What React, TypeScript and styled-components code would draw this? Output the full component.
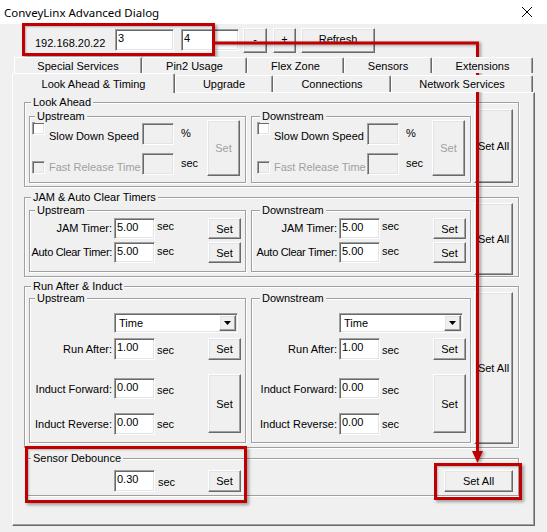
import React from "react"
import styled, { createGlobalStyle, css } from "styled-components"

const GlobalStyle = createGlobalStyle`
  html, body { margin: 0; padding: 0; background: #f0f0f0; }
  body {
    font-family: "Liberation Sans", Arial, sans-serif;
    font-size: 11px;
    color: #000;
  }
  * { box-sizing: border-box; }
`

const sunken = css`
  border: 1px solid;
  border-color: #a0a0a0 #fff #fff #a0a0a0;
  box-shadow: inset 1px 1px 0 #696969, inset -1px -1px 0 #e3e3e3;
`

const raised = css`
  border: 1px solid;
  border-color: #fff #696969 #696969 #fff;
  box-shadow: inset -1px -1px 0 #a0a0a0, inset 1px 1px 0 #e3e3e3;
`

const Window = styled.div`
  position: relative;
  width: 547px;
  height: 532px;
  overflow: hidden;
  background: #f0f0f0;
`

const TitleBar = styled.div`
  height: 24px;
  background: #fff;
  display: flex;
  align-items: center;
  justify-content: space-between;
  padding: 0 15px 0 4px;
  font-family: "Noto Sans", "Liberation Sans", sans-serif;
  font-size: 11.5px;
`

const Toolbar = styled.div`
  height: 33px;
  display: flex;
  align-items: flex-start;
  padding: 4px 0 0 35px;
`

const IpText = styled.span`
  width: 80px;
  margin-top: 9px;
  line-height: 13px;
`

const Edit = styled.div<{ $w?: number; $h?: number; $off?: boolean; $ml?: number; $mt?: number }>`
  ${sunken}
  flex: none;
  align-self: start;
  width: ${p => p.$w ?? 41}px;
  height: ${p => p.$h ?? 21}px;
  margin: ${p => p.$mt ?? 0}px 0 0 ${p => p.$ml ?? 0}px;
  padding: 2px 0 0 2px;
  line-height: 13px;
  background: ${p => (p.$off ? "#f0f0f0" : "#fff")};
`

const Btn = styled.button<{
  $w: number
  $h: number
  $off?: boolean
  $ml?: number
  $mt?: number
  $span?: number
  $lift?: number
}>`
  ${raised}
  flex: none;
  align-self: start;
  width: ${p => p.$w}px;
  height: ${p => p.$h}px;
  margin: ${p => p.$mt ?? 0}px 0 0 ${p => p.$ml ?? 0}px;
  padding: 0 0 ${p => p.$lift ?? 0}px;
  background: #f0f0f0;
  font: inherit;
  color: ${p => (p.$off ? "#a0a0a0" : "#000")};
  display: flex;
  align-items: center;
  justify-content: center;
  grid-row: ${p => (p.$span ? `span ${p.$span}` : "auto")};
`

const TabStrip = styled.div<{ $h: number; $pl: number }>`
  display: flex;
  align-items: flex-end;
  height: ${p => p.$h}px;
  padding-left: ${p => p.$pl}px;
`

const Tab = styled.div<{ $w: number; $h: number; $active?: boolean }>`
  position: relative;
  z-index: ${p => (p.$active ? 2 : 1)};
  width: ${p => p.$w}px;
  height: ${p => p.$h}px;
  margin-bottom: ${p => (p.$active ? -1 : 0)}px;
  border: 1px solid;
  border-bottom: none;
  border-color: #fff #696969 transparent #fff;
  border-radius: 2px 2px 0 0;
  box-shadow: inset -1px 0 0 #a0a0a0;
  background: #f0f0f0;
  display: flex;
  align-items: center;
  justify-content: center;
  white-space: nowrap;
`

const Panel = styled.div`
  margin-left: 12px;
  width: 523px;
  height: 434px;
  border: 1px solid;
  border-color: #fff #696969 #696969 #fff;
  box-shadow: inset -1px -1px 0 #a0a0a0;
  padding: 0 0 0 11px;
  display: flex;
  flex-direction: column;
  align-items: flex-start;
`

const Group = styled.div<{ $w: number; $mt?: number; $ml?: number; $pad: string }>`
  position: relative;
  flex: none;
  width: ${p => p.$w}px;
  margin: ${p => p.$mt ?? 0}px 0 0 ${p => p.$ml ?? 0}px;
  padding: ${p => p.$pad};
  border: 1px solid #a0a0a0;
  box-shadow: inset 1px 1px 0 #fff, 1px 1px 0 #fff;
`

const Caption = styled.span<{ $left: number }>`
  position: absolute;
  top: -7px;
  left: ${p => p.$left}px;
  padding: 0 2px;
  line-height: 13px;
  background: #f0f0f0;
  white-space: nowrap;
`

const SubRow = styled.div`
  display: flex;
  align-items: flex-start;
`

const LookGrid = styled.div`
  display: grid;
  grid-template-columns: 110px 32px 33px 33px;
  grid-template-rows: 22px 22px;
  row-gap: 8px;
`

const FieldGrid = styled.div`
  display: grid;
  grid-template-columns: 84px 41px 53px 33px;
  grid-auto-rows: 21px;
  row-gap: 3px;
`

const RunGrid = styled.div`
  display: grid;
  grid-template-columns: 84px 41px 53px 33px;
  grid-template-rows: 25px 40px 35px 22px;
`

const CheckCell = styled.div<{ $off?: boolean }>`
  display: flex;
  align-items: flex-start;
  gap: 4px;
  color: ${p => (p.$off ? "#a0a0a0" : "#000")};
`

const CheckBox = styled.span<{ $off?: boolean; $mt: number }>`
  ${sunken}
  flex: none;
  width: 13px;
  height: 13px;
  margin-top: ${p => p.$mt}px;
  background: ${p => (p.$off ? "#f0f0f0" : "#fff")};
`

const CheckText = styled.span<{ $mt: number }>`
  margin-top: ${p => p.$mt}px;
  line-height: 13px;
  white-space: nowrap;
`

const FieldLabel = styled.span<{ $mt?: number; $tight?: boolean }>`
  justify-self: end;
  align-self: start;
  margin-top: ${p => p.$mt ?? 4}px;
  padding-right: 2px;
  line-height: 13px;
  white-space: nowrap;
  letter-spacing: ${p => (p.$tight ? "-0.3px" : "normal")};
`

const Unit = styled.span<{ $mt?: number; $pl?: number }>`
  align-self: start;
  margin-top: ${p => p.$mt ?? 4}px;
  padding-left: ${p => p.$pl ?? 2}px;
  line-height: 13px;
  white-space: nowrap;
`

const Combo = styled.div`
  ${sunken}
  grid-column: 2 / 5;
  align-self: start;
  height: 20px;
  margin-right: 3px;
  background: #fff;
  display: flex;
  align-items: stretch;
  padding: 1px;
`

const ComboText = styled.span`
  flex: 1;
  padding: 2px 0 0 3px;
  line-height: 13px;
`

const ComboArrow = styled.span`
  ${raised}
  width: 17px;
  background: #f0f0f0;
  display: flex;
  align-items: center;
  justify-content: center;
`

const Annotation = styled.div<{ $x: number; $y: number; $w: number; $h: number }>`
  position: absolute;
  left: ${p => p.$x}px;
  top: ${p => p.$y}px;
  width: ${p => p.$w}px;
  height: ${p => p.$h}px;
  border: 3px solid #c00000;
  box-shadow: 2px 2px 3px rgba(0, 0, 0, 0.35), inset 1px 1px 2px rgba(0, 0, 0, 0.25);
  pointer-events: none;
`

const Connector = styled.svg`
  position: absolute;
  left: 0;
  top: 0;
  pointer-events: none;
  filter: drop-shadow(2px 1px 1.5px rgba(0, 0, 0, 0.35));
`

const backTabs = [
  { label: "Special Services", w: 128 },
  { label: "Pin2 Usage", w: 105 },
  { label: "Flex Zone", w: 97 },
  { label: "Sensors", w: 88 },
  { label: "Extensions", w: 101 },
]

const frontTabs = [
  { label: "Look Ahead & Timing", w: 163, active: true },
  { label: "Upgrade", w: 98 },
  { label: "Connections", w: 118 },
  { label: "Network Services", w: 142 },
]

interface SideProps {
  caption: string
  capLeft: number
  w: number
  pl: number
  ml?: number
}

const LookAheadSide: React.FC<SideProps> = ({ caption, capLeft, w, pl, ml }) => (
  <Group $w={w} $ml={ml} $mt={7} $pad={`6px 0 7px ${pl}px`}>
    <Caption $left={capLeft}>{caption}</Caption>
    <LookGrid>
      <CheckCell>
        <CheckBox $mt={-1} />
        <CheckText $mt={7}>Slow Down Speed</CheckText>
      </CheckCell>
      <Edit $w={32} $h={22} $off />
      <Unit $pl={7}>%</Unit>
      <Btn $w={33} $h={56} $mt={-3} $span={2} $off>
        Set
      </Btn>
      <CheckCell $off>
        <CheckBox $mt={8} $off />
        <CheckText $mt={8}>Fast Release Time</CheckText>
      </CheckCell>
      <Edit $w={32} $h={22} $off />
      <Unit $pl={7}>sec</Unit>
    </LookGrid>
  </Group>
)

const TimersSide: React.FC<SideProps> = ({ caption, capLeft, w, pl, ml }) => (
  <Group $w={w} $ml={ml} $mt={7} $pad={`7px 0 8px ${pl}px`}>
    <Caption $left={capLeft}>{caption}</Caption>
    <FieldGrid>
      <FieldLabel>JAM Timer:</FieldLabel>
      <Edit>5.00</Edit>
      <Unit $mt={2}>sec</Unit>
      <Btn $w={33} $h={21}>
        Set
      </Btn>
      <FieldLabel $tight>Auto Clear Timer:</FieldLabel>
      <Edit>5.00</Edit>
      <Unit $mt={3}>sec</Unit>
      <Btn $w={33} $h={21}>
        Set
      </Btn>
    </FieldGrid>
  </Group>
)

const DropArrow = () => (
  <svg width="7" height="4" viewBox="0 0 7 4">
    <polygon points="0,0 7,0 3.5,4" fill="#000" />
  </svg>
)

const RunSide: React.FC<SideProps> = ({ caption, capLeft, w, pl, ml }) => (
  <Group $w={w} $ml={ml} $mt={6} $pad={`14px 0 7px ${pl}px`}>
    <Caption $left={capLeft}>{caption}</Caption>
    <RunGrid>
      <Combo>
        <ComboText>Time</ComboText>
        <ComboArrow>
          <DropArrow />
        </ComboArrow>
      </Combo>
      <FieldLabel $mt={5}>Run After:</FieldLabel>
      <Edit $h={22}>1.00</Edit>
      <Unit $mt={6}>sec</Unit>
      <Btn $w={33} $h={22}>
        Set
      </Btn>
      <FieldLabel $mt={5}>Induct Forward:</FieldLabel>
      <Edit $h={21}>0.00</Edit>
      <Unit $mt={6}>sec</Unit>
      <Btn $w={33} $h={59} $mt={-4} $span={2}>
        Set
      </Btn>
      <FieldLabel $mt={5}>Induct Reverse:</FieldLabel>
      <Edit $h={22}>0.00</Edit>
      <Unit $mt={5}>sec</Unit>
    </RunGrid>
  </Group>
)

export default function App() {
  return (
    <>
      <GlobalStyle />
      <Window>
        <TitleBar>
          <span>ConveyLinx Advanced Dialog</span>
          <svg width="10" height="10" viewBox="0 0 10 10">
            <path d="M0 0L10 10M10 0L0 10" stroke="#000" strokeWidth="1" />
          </svg>
        </TitleBar>

        <Toolbar>
          <IpText>192.168.20.22</IpText>
          <Edit $w={59} $h={22} $mt={1}>
            3
          </Edit>
          <Edit $w={58} $h={22} $mt={1} $ml={7}>
            4
          </Edit>
          <Btn $w={24} $h={25} $ml={4} $lift={4}>
            -
          </Btn>
          <Btn $w={23} $h={25} $ml={6} $lift={3}>
            +
          </Btn>
          <Btn $w={74} $h={25} $ml={5} $lift={3}>
            Refresh
          </Btn>
        </Toolbar>

        <TabStrip $h={16} $pl={14}>
          {backTabs.map(t => (
            <Tab key={t.label} $w={t.w} $h={16}>
              {t.label}
            </Tab>
          ))}
        </TabStrip>
        <TabStrip $h={19} $pl={12}>
          {frontTabs.map(t => (
            <Tab key={t.label} $w={t.w} $h={t.active ? 20 : 17} $active={t.active}>
              {t.label}
            </Tab>
          ))}
        </TabStrip>

        <Panel>
          <Group $w={495} $mt={9} $pad="6px 0 3px 4px">
            <Caption $left={6}>Look Ahead</Caption>
            <SubRow>
              <LookAheadSide caption="Upstream" capLeft={5} w={217} pl={2} />
              <LookAheadSide caption="Downstream" capLeft={8} w={220} pl={5} ml={5} />
              <Btn $w={39} $h={74} $ml={3}>
                Set All
              </Btn>
            </SubRow>
          </Group>

          <Group $w={495} $mt={10} $pad="5px 0 1px 4px">
            <Caption $left={6}>JAM &amp; Auto Clear Timers</Caption>
            <SubRow>
              <TimersSide caption="Upstream" capLeft={5} w={217} pl={0} />
              <TimersSide caption="Downstream" capLeft={8} w={220} pl={3} ml={5} />
              <Btn $w={39} $h={72} $ml={3}>
                Set All
              </Btn>
            </SubRow>
          </Group>

          <Group $w={495} $mt={9} $pad="5px 0 3px 4px">
            <Caption $left={6}>Run After &amp; Induct</Caption>
            <SubRow>
              <RunSide caption="Upstream" capLeft={5} w={217} pl={0} />
              <RunSide caption="Downstream" capLeft={8} w={220} pl={3} ml={5} />
              <Btn $w={39} $h={152} $ml={3}>
                Set All
              </Btn>
            </SubRow>
          </Group>

          <Group $w={494} $mt={10} $ml={1} $pad="11px 4px 3px 4px">
            <Caption $left={5}>Sensor Debounce</Caption>
            <SubRow>
              <FieldGrid>
                <FieldLabel />
                <Edit $h={22}>0.30</Edit>
                <Unit $mt={6} $pl={3}>
                  sec
                </Unit>
                <Btn $w={33} $h={22}>
                  Set
                </Btn>
              </FieldGrid>
              <Btn $w={69} $h={22} $ml={203}>
                Set All
              </Btn>
            </SubRow>
          </Group>
        </Panel>

        <Annotation $x={22} $y={23} $w={193} $h={33} />
        <Annotation $x={25} $y={446} $w={222} $h={57} />
        <Annotation $x={434} $y={463} $w={88} $h={37} />
        <Connector width={547} height={532} viewBox="0 0 547 532">
          <polyline
            points="215,43 477.5,43 477.5,453"
            fill="none"
            stroke="#c00000"
            strokeWidth="3"
          />
          <polygon points="472,451 483,451 477.5,463" fill="#c00000" />
        </Connector>
      </Window>
    </>
  )
}
